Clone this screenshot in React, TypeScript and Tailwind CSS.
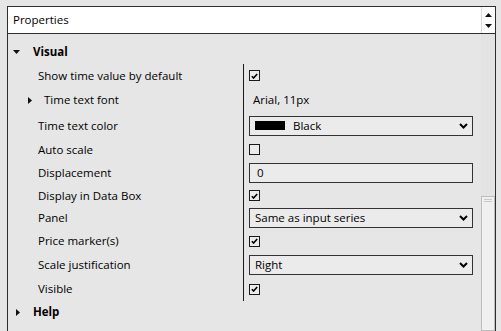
import React from 'react'

type Row = {
  label: string
  h: string
  kind: 'check' | 'text' | 'color' | 'input' | 'select'
  checked?: boolean
  value?: string
  expandable?: boolean
}

const rows: Row[] = [
  { label: 'Show time value by default', h: 'h-[23px]', kind: 'check', checked: true },
  { label: 'Time text font', h: 'h-[26px]', kind: 'text', value: 'Arial, 11px', expandable: true },
  { label: 'Time text color', h: 'h-[25px]', kind: 'color', value: 'Black' },
  { label: 'Auto scale', h: 'h-[23px]', kind: 'check', checked: false },
  { label: 'Displacement', h: 'h-[23px]', kind: 'input', value: '0' },
  { label: 'Display in Data Box', h: 'h-[23px]', kind: 'check', checked: true },
  { label: 'Panel', h: 'h-[22px]', kind: 'select', value: 'Same as input series' },
  { label: 'Price marker(s)', h: 'h-[24px]', kind: 'check', checked: true },
  { label: 'Scale justification', h: 'h-[24px]', kind: 'select', value: 'Right' },
  { label: 'Visible', h: 'h-[24px]', kind: 'check', checked: true },
]

const Check = ({ checked }: { checked?: boolean }) => (
  <div className="ml-[5px] w-[11px] h-[11px] border border-[#1a1a1a] bg-[#ececec] flex items-center justify-center">
    {checked && (
      <svg width="7" height="6" viewBox="0 0 7 6">
        <path d="M0.8 3.2 L2.6 5 L6.2 1" fill="none" stroke="#000" strokeWidth="1.6" />
      </svg>
    )}
  </div>
)

const Chevron = () => (
  <svg width="9" height="6" viewBox="0 0 9 6" className="mr-[4px]">
    <path d="M1 1 L4.5 4.5 L8 1" fill="none" stroke="#000" strokeWidth="2" />
  </svg>
)

const Value = ({ row }: { row: Row }) => {
  if (row.kind === 'check') return <Check checked={row.checked} />
  if (row.kind === 'text') return <span className="ml-[9px]">{row.value}</span>
  if (row.kind === 'input')
    return (
      <div className="ml-[5px] w-[224px] h-[20px] border border-[#333] bg-[#ebebeb] flex items-center pl-[7px]">
        {row.value}
      </div>
    )
  return (
    <div className="ml-[5px] w-[224px] h-[20px] border border-[#333] bg-[#ebebeb] flex items-center justify-between pl-[5px]">
      <div className="flex items-center">
        {row.kind === 'color' && <div className="w-[30px] h-[9px] bg-black mr-[8px]" />}
        <span>{row.value}</span>
      </div>
      <Chevron />
    </div>
  )
}

export default function App() {
  return (
    <div className="w-[501px] h-[331px] overflow-hidden bg-[#e6e6e6] pt-[6px] pl-[7px] pr-[5px] font-['Open_Sans',sans-serif] text-[11.5px] text-black">
      <div className="h-full border-l border-t border-r border-[#2e2e2e] flex flex-col">
        <div className="h-[27px] bg-white border-b border-[#2e2e2e] flex">
          <div className="flex-1 flex items-center pl-[5px]">Properties</div>
          <div className="w-[14px] border-l border-[#dcdcdc] flex flex-col items-center justify-center gap-[7px]">
            <svg width="7" height="4" viewBox="0 0 7 4">
              <path d="M0 4 L3.5 0 L7 4 Z" fill="#111" />
            </svg>
            <svg width="7" height="4" viewBox="0 0 7 4">
              <path d="M0 0 L7 0 L3.5 4 Z" fill="#111" />
            </svg>
          </div>
        </div>

        <div className="flex-1 flex">
          <div className="flex-1 pt-[6px]">
            <div className="h-[24px] flex items-center font-bold">
              <svg width="7" height="4" viewBox="0 0 7 4" className="ml-[5px] mr-[13px]">
                <path d="M0 0 L7 0 L3.5 4 Z" fill="#111" />
              </svg>
              Visual
            </div>

            {rows.map((row) => (
              <div key={row.label} className={`${row.h} flex`}>
                <div className="w-[235px] flex items-center">
                  {row.expandable ? (
                    <>
                      <svg width="4" height="7" viewBox="0 0 4 7" className="ml-[20px] mr-[12px]">
                        <path d="M0 0 L4 3.5 L0 7 Z" fill="#111" />
                      </svg>
                      <span>{row.label}</span>
                    </>
                  ) : (
                    <span className="ml-[30px]">{row.label}</span>
                  )}
                </div>
                <div className="flex-1 border-l border-[#1a1a1a] flex items-center">
                  <Value row={row} />
                </div>
              </div>
            ))}

            <div className="h-[22px] flex items-center font-bold">
              <svg width="4" height="7" viewBox="0 0 4 7" className="ml-[8px] mr-[13px]">
                <path d="M0 0 L4 3.5 L0 7 Z" fill="#111" />
              </svg>
              Help
            </div>
          </div>

          <div className="w-[14px] bg-[#e3e3e3] flex flex-col pt-[162px]">
            <div className="flex-1 bg-[#f0f0f0] border border-[#bdbdbd] flex flex-col items-center pt-[2px] gap-[1px]">
              <div className="w-[8px] h-px bg-[#c8c8c8]" />
              <div className="w-[8px] h-px bg-[#c8c8c8]" />
            </div>
          </div>
        </div>
      </div>
    </div>
  )
}
